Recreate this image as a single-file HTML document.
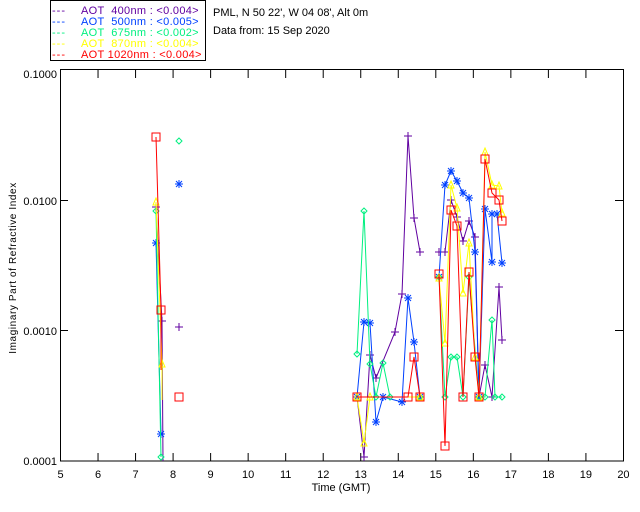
<!DOCTYPE html><html><head><style>body{margin:0;background:#fff}svg{display:block;font-family:"Liberation Sans",sans-serif}</style></head><body>
<svg id="s" width="640" height="512" xmlns="http://www.w3.org/2000/svg">
<rect width="640" height="512" fill="#fff"/>
<rect x="50.5" y="0.5" width="155" height="60" fill="none" stroke="#000"/>
<g font-size="11">
<g letter-spacing="1">
<text x="52" y="14" fill="#6000a0">---</text>
<text x="52" y="25" fill="#0040ff">---</text>
<text x="52" y="36" fill="#00f080">---</text>
<text x="52" y="47" fill="#ffff00">---</text>
<text x="52" y="58" fill="#ff0000">---</text>
</g>
<g letter-spacing="0.3">
<text x="81" y="14" fill="#6000a0">AOT&#160;&#160;400nm : &lt;0.004&gt;</text>
<text x="81" y="25" fill="#0040ff">AOT&#160;&#160;500nm : &lt;0.005&gt;</text>
<text x="81" y="36" fill="#00f080">AOT&#160;&#160;675nm : &lt;0.002&gt;</text>
<text x="81" y="47" fill="#ffff00">AOT&#160;&#160;870nm : &lt;0.004&gt;</text>
<text x="81" y="58" fill="#ff0000">AOT 1020nm : &lt;0.004&gt;</text>
</g>
<text x="213" y="16" fill="#000">PML, N 50 22', W 04 08', Alt 0m</text>
<text x="213" y="34" fill="#000">Data from: 15 Sep 2020</text>
<text x="57" y="78" text-anchor="end">0.1000</text>
<text x="57" y="205" text-anchor="end">0.0100</text>
<text x="57" y="335" text-anchor="end">0.0010</text>
<text x="57" y="465" text-anchor="end">0.0001</text>
<text x="341" y="491" text-anchor="middle">Time (GMT)</text>
<text transform="translate(16,268) rotate(-90)" text-anchor="middle" font-size="10" letter-spacing="0.6">Imaginary Part of Refractive Index</text>
</g>
<rect x="60.5" y="69.5" width="563" height="391.5" fill="none" stroke="#000"/>
<g stroke="#000"><path d="M60 200.5h8M60 330.5h8M623 200.5h-8M623 330.5h-8"/></g>
<g id="ax" stroke="#000"></g><g id="lb" font-size="11" text-anchor="middle"></g>
<g id="d" fill="none" stroke-width="1"></g>
</svg>
<script>
var ax=document.getElementById('ax'),lb=document.getElementById('lb'),d=document.getElementById('d'),NS='http://www.w3.org/2000/svg';
function el(p,t,a,txt){var e=document.createElementNS(NS,t);for(var k in a)e.setAttribute(k,a[k]);if(txt)e.textContent=txt;p.appendChild(e);return e;}
for(var h=5;h<=20;h++){var x=60.5+(h-5)*37.53;if(h>5&&h<20){el(ax,'line',{x1:x,x2:x,y1:461,y2:453});el(ax,'line',{x1:x,x2:x,y1:70,y2:78});}el(lb,'text',{x:x,y:478},''+h);}
var S={
p:['#6000a0',[[156,207],[162,321],[163,461]],[[357,397],[364,457],[370,355],[376,378],[395,332],[402,294],[408,136],[414,218],[420,252]],[[439,252],[445,252],[451,200],[457,217],[463,241],[469,221],[475,237],[479,397],[485,365],[492,397],[499,287],[502,340]],[[179,327]]],
b:['#0040ff',[[156,243],[161,434]],[[357,397],[364,322],[370,323],[376,422],[383,397],[402,402],[408,298],[414,342],[420,397]],[[439,277],[445,185],[451,171],[457,181],[463,193],[469,198],[475,252],[479,397],[485,209],[492,262],[492,214],[497,214],[502,263]],[[179,184]]],
g:['#00f080',[[156,211],[161,457]],[[357,354],[364,211],[370,364],[376,397],[383,363],[390,397],[420,397]],[[439,277],[445,397],[451,357],[457,357],[463,397],[469,277],[479,397],[485,397],[492,320],[495,397],[502,397]],[[179,141]]],
y:['#ffff00',[[156,202],[162,364],[162,400]],[[357,397],[364,443],[370,397],[420,397]],[[439,278],[445,343],[451,185],[457,208],[463,293],[469,243],[475,357],[479,397],[485,152],[492,185],[499,186],[502,213]],[]],
r:['#ff0000',[[156,137],[161,310],[161,370]],[[357,397],[408,397],[414,357],[420,397]],[[439,274],[445,446],[451,210],[457,226],[463,397],[469,272],[475,357],[479,397],[485,159],[492,193],[499,200],[502,221]],[[179,397]]]};
for(var k in S){var c=S[k][0];for(var i=1;i<4;i++){var pts=S[k][i];el(d,'polyline',{points:pts.map(p=>p.join(',')).join(' '),stroke:c});pts.forEach(function(p,j){if(i==1&&j==2)return;mk(k,p,c)});}S[k][4].forEach(function(p){mk(k,p,c)});}
function mk(k,p,c){var x=p[0],y=p[1];
if(k=='r')el(d,'rect',{x:x-4,y:y-4,width:8,height:8,stroke:c});
else if(k=='p'){el(d,'path',{d:'M'+(x-4)+' '+y+'h8M'+x+' '+(y-4)+'v8',stroke:c});}
else if(k=='b'){el(d,'path',{d:'M'+(x-4)+' '+y+'h8M'+x+' '+(y-4)+'v8M'+(x-3)+' '+(y-3)+'l6 6M'+(x+3)+' '+(y-3)+'l-6 6',stroke:c});}
else if(k=='g')el(d,'path',{d:'M'+x+' '+(y-3)+'l3 3-3 3-3-3z',stroke:c});
else el(d,'path',{d:'M'+x+' '+(y-4)+'l3 7h-6z',stroke:c});}
</script>
</body></html>
